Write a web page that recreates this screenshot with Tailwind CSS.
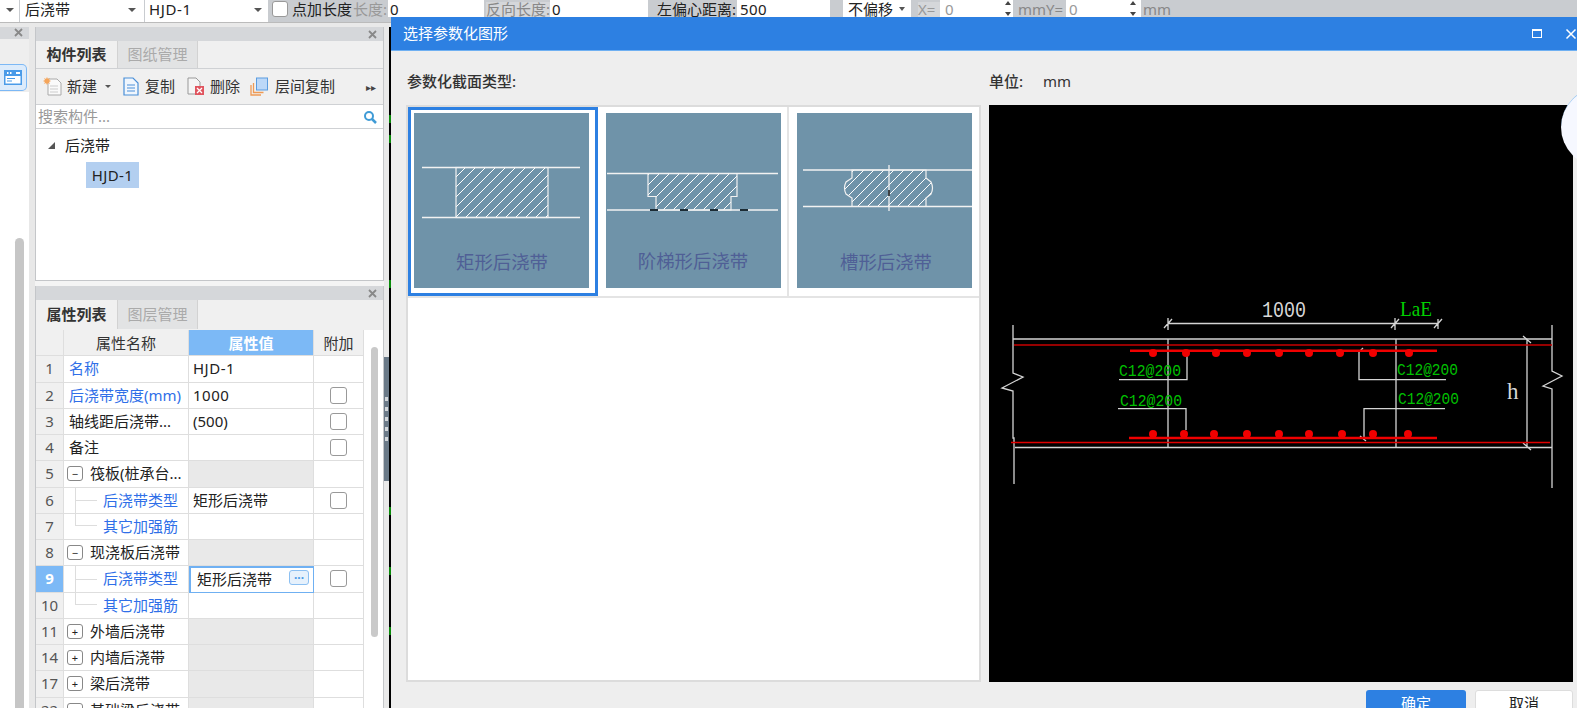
<!DOCTYPE html>
<html lang="zh">
<head>
<meta charset="utf-8">
<script src="https://cdn.jsdelivr.net/npm/@tailwindcss/browser@4"></script>
</head>
<body class="m-0">
<div class="relative w-[1577px] h-[708px] overflow-hidden bg-[#e9e9e9] text-[15px] leading-none text-[#222] font-['Noto_Sans','Noto_Sans_CJK_SC',sans-serif]">

  <!-- top toolbar -->
  <div class="flex h-[23px] items-start bg-[#c9ccd0] whitespace-nowrap border-b border-[#bbb]">
    <div class="relative h-[22px] w-[19px] bg-white"><span class="absolute left-[6px] top-[8px] border-x-[4px] border-t-[4px] border-x-transparent border-t-[#555]"></span></div>
    <div class="relative ml-[1px] h-[22px] w-[124px] bg-white pl-[5px] pt-[2px]">后浇带<span class="absolute right-[8px] top-[8px] border-x-[4px] border-t-[4px] border-x-transparent border-t-[#555]"></span></div>
    <div class="relative ml-[1px] h-[22px] w-[123px] bg-white pl-[4px] pt-[2px] tracking-[0.6px]">HJD-1<span class="absolute right-[6px] top-[8px] border-x-[4px] border-t-[4px] border-x-transparent border-t-[#555]"></span></div>
    <div class="ml-[4px] mt-[1px] h-[16px] w-[16px] rounded-[3px] border border-[#999] bg-white"></div>
    <span class="ml-[4px] mt-[2px] w-[61px]">点加长度</span>
    <span class="mt-[2px] w-[35px] text-[#999]">长度:</span>
    <div class="h-[17px] w-[96px] bg-white pl-[2px] pt-[2px]">0</div>
    <span class="ml-[2px] mt-[2px] w-[64px] bg-[#d5d7da] pb-[2px] text-[#888]">反向长度:</span>
    <div class="h-[17px] w-[98px] bg-white pl-[2px] pt-[2px]">0</div>
    <span class="ml-[8px] mt-[2px] w-[81px] pl-[1px]">左偏心距离:</span>
    <div class="h-[17px] w-[93px] bg-white pl-[3px] pt-[2px] tracking-[0.4px]">500</div>
    <div class="relative ml-[13px] h-[17px] w-[68px] bg-white pl-[5px] pt-[2px]">不偏移<span class="absolute right-[6px] top-[7px] border-x-[3px] border-t-[4px] border-x-transparent border-t-[#555]"></span></div>
    <span class="ml-[7px] mt-[2px] w-[22px] bg-[#d5d7da] pb-[2px] text-[#999]">X=</span>
    <div class="relative h-[17px] w-[73px] bg-white pl-[5px] pt-[2px] text-[#999]">0<span class="absolute right-[2px] top-[1px] border-x-[3px] border-b-[4px] border-x-transparent border-b-[#444]"></span><span class="absolute bottom-[1px] right-[2px] border-x-[3px] border-t-[4px] border-x-transparent border-t-[#444]"></span></div>
    <span class="ml-[5px] mt-[2px] w-[48px] text-[#888]">mmY=</span>
    <div class="relative h-[17px] w-[75px] bg-white pl-[3px] pt-[2px] text-[#999]">0<span class="absolute right-[5px] top-[1px] border-x-[3px] border-b-[4px] border-x-transparent border-b-[#444]"></span><span class="absolute bottom-[1px] right-[5px] border-x-[3px] border-t-[4px] border-x-transparent border-t-[#444]"></span></div>
    <span class="ml-[2px] mt-[2px] text-[#888]">mm</span>
  </div>

  <!-- workspace -->
  <div class="flex h-[685px] pt-[4px]">
    <!-- far left strip -->
    <div class="flex w-[29px] flex-col">
      <div class="flex h-[14px] items-center justify-end bg-[#d5d7da] pr-[6px]"><svg width="9" height="9" viewBox="0 0 9 9"><path d="M1 1l7 7M8 1l-7 7" stroke="#888" stroke-width="1.800"/></svg></div>
      <div class="h-[29px] bg-[#eeeeee]"></div>
      <div class="flex h-[34px] items-center bg-[#eeeeee]">
        <div class="flex h-[27px] w-[27px] items-center justify-end rounded-r-[5px] border border-l-0 border-[#7cb8f5] bg-[#dcebfb] pr-[4px]">
          <svg width="18" height="15" viewBox="0 0 18 15"><rect width="18" height="15" fill="#4a9be8"/><rect x="1.500" y="6" width="15" height="7.500" fill="#fff"/><rect x="3" y="8" width="8" height="1" fill="#4a9be8"/><rect x="3" y="10.500" width="5" height="1" fill="#4a9be8"/><rect x="3" y="2" width="1.500" height="2" fill="#fff"/><rect x="6" y="2" width="1.500" height="2" fill="#fff"/><rect x="12" y="2" width="4" height="2" fill="#fff"/></svg>
        </div>
      </div>
      <div class="flex-1 bg-white pl-[15px] pr-[5px] pt-[146px]"><div class="h-[470px] rounded-t-[5px] bg-[#c6c6c6]"></div></div>
    </div>

    <div class="w-[6px] bg-[#e8e8e8]"></div>

    <!-- main column -->
    <div class="flex w-[349px] flex-col">
      <!-- component panel -->
      <div class="flex h-[254px] flex-col border-x border-b border-[#c4c6c9]">
        <div class="flex h-[14px] shrink-0 items-center justify-end bg-[#d5d7da] pr-[6px]"><svg width="9" height="9" viewBox="0 0 9 9"><path d="M1 1l7 7M8 1l-7 7" stroke="#888" stroke-width="1.800"/></svg></div>
        <div class="flex h-[28px] shrink-0 border-b border-[#cfd1d4] bg-[#f0f0f0]">
          <div class="flex w-[81px] items-center justify-center font-bold text-[#333]">构件列表</div>
          <div class="flex w-[81px] items-center justify-center border-x border-[#d2d2d2] bg-[#e2e3e4] text-[#aaa]">图纸管理</div>
        </div>
        <div class="flex h-[36px] shrink-0 items-center border-b border-[#cfd1d4] bg-[#f0f0f0] text-[#333]">
          <svg class="ml-[7px]" width="19" height="19" viewBox="0 0 19 19"><path d="M5 2h9l4 4v12H5z" fill="#fafafa" stroke="#aaa"/><path d="M7 9h8M7 12h8M7 15h8" stroke="#ccc"/><path d="M4 0l1 2 2-1-1 2 2 1-2 1 1 2-2-1-1 2-1-2-2 1 1-2-2-1 2-1-1-2 2 1z" fill="#f5a55a"/></svg>
          <span class="ml-[5px]">新建</span>
          <span class="ml-[8px] border-x-[3px] border-t-[3px] border-x-transparent border-t-[#555]"></span>
          <svg class="ml-[12px]" width="16" height="19" viewBox="0 0 16 19"><path d="M1 1h9l5 5v12H1z" fill="#f0f6fd" stroke="#4a8fd8" stroke-width="1.200"/><path d="M4 8h8M4 11h8M4 14h8" stroke="#4a8fd8"/></svg>
          <span class="ml-[6px]">复制</span>
          <svg class="ml-[12px]" width="18" height="19" viewBox="0 0 18 19"><path d="M1 1h8l4 4v12H1z" fill="#f5f5f5" stroke="#999"/><rect x="8" y="9" width="9" height="9" fill="#e0555f"/><path d="M10 11l5 5M15 11l-5 5" stroke="#fff" stroke-width="1.300"/></svg>
          <span class="ml-[5px]">删除</span>
          <svg class="ml-[10px]" width="18" height="19" viewBox="0 0 18 19"><path d="M1 8v10h10" fill="none" stroke="#ee9a55" stroke-width="1.300"/><path d="M3.500 6v9.500h10" fill="none" stroke="#ee9a55" stroke-width="1.300"/><rect x="6.500" y="1" width="11" height="12" fill="#bcd8f8" stroke="#5a9ce0"/></svg>
          <span class="ml-[7px]">层间复制</span>
          <span class="ml-auto mr-[7px] text-[10px] text-[#444]">▸▸</span>
        </div>
        <div class="flex h-[24px] shrink-0 items-center justify-between border-b border-[#cfd1d4] bg-white pl-[2px] pr-[6px] text-[#999]">搜索构件...
          <svg width="14" height="14" viewBox="0 0 14 14"><circle cx="6" cy="6" r="4" fill="none" stroke="#3f9bd6" stroke-width="2"/><path d="M9 9l4 4" stroke="#3f9bd6" stroke-width="2.500"/></svg>
        </div>
        <div class="flex-1 bg-white">
          <div class="flex items-center pl-[12px] pt-[9px]"><span class="h-0 w-0 border-b-[7px] border-l-[7px] border-b-[#555] border-l-transparent"></span><span class="ml-[10px]">后浇带</span></div>
          <div class="ml-[50px] mt-[9px] flex h-[26px] w-[53px] items-center justify-center bg-[#b3cff0] tracking-[0.4px] text-[#222]">HJD-1</div>
        </div>
      </div>

      <div class="h-[5px] bg-[#f4f4f4]"></div>

      <!-- property panel -->
      <div class="flex flex-1 flex-col overflow-hidden border-x border-[#c4c6c9]">
        <div class="flex h-[14px] shrink-0 items-center justify-end bg-[#d5d7da] pr-[6px]"><svg width="9" height="9" viewBox="0 0 9 9"><path d="M1 1l7 7M8 1l-7 7" stroke="#888" stroke-width="1.800"/></svg></div>
        <div class="flex h-[30px] shrink-0 bg-[#f0f0f0] pb-[1px]">
          <div class="flex w-[81px] items-center justify-center font-bold text-[#333]">属性列表</div>
          <div class="flex w-[81px] items-center justify-center border-x border-[#d2d2d2] bg-[#e2e3e4] text-[#aaa]">图层管理</div>
        </div>
        <div class="flex flex-1 bg-white">
          <div class="grid w-[328px] grid-cols-[28px_125px_125px_50px] auto-rows-[26.25px] content-start [&>div]:border-b [&>div]:border-r [&>div]:border-[#dedede] [&>div]:flex [&>div]:items-center">
            <div class="bg-[#f0f0f0]"></div><div class="justify-center bg-[#f0f0f0] pt-[1px] text-[#333]">属性名称</div><div class="justify-center bg-[#7cb9f6] pt-[1px] font-bold text-white">属性值</div><div class="justify-center bg-[#f0f0f0] pt-[1px] text-[#333]">附加</div>

            <div class="justify-center bg-[#f0f0f0] text-[#555]">1</div><div class="pl-[5px] text-[#2f6fe8]">名称</div><div class="pl-[4px] tracking-[0.5px]">HJD-1</div><div></div>
            <div class="justify-center bg-[#f0f0f0] text-[#555]">2</div><div class="pl-[5px] text-[#2f6fe8]">后浇带宽度(mm)</div><div class="pl-[4px] tracking-[0.5px]">1000</div><div class="justify-center"><span class="h-[17px] w-[17px] rounded-[3px] border border-[#999]"></span></div>
            <div class="justify-center bg-[#f0f0f0] text-[#555]">3</div><div class="pl-[5px]">轴线距后浇带...</div><div class="pl-[4px]">(500)</div><div class="justify-center"><span class="h-[17px] w-[17px] rounded-[3px] border border-[#999]"></span></div>
            <div class="justify-center bg-[#f0f0f0] text-[#555]">4</div><div class="pl-[5px]">备注</div><div></div><div class="justify-center"><span class="h-[17px] w-[17px] rounded-[3px] border border-[#999]"></span></div>
            <div class="justify-center bg-[#f0f0f0] text-[#555]">5</div><div class="pl-[3px]"><span class="mr-[7px] flex h-[15px] w-[16px] items-center justify-center rounded-[3px] border border-[#888] text-[11px]">−</span>筏板(桩承台...</div><div class="bg-[#e9e9e9]"></div><div></div>
            <div class="justify-center bg-[#f0f0f0] text-[#555]">6</div><div class="relative pl-[39px] text-[#2f6fe8]"><span class="absolute left-[11px] top-0 h-full border-l border-[#ddd]"></span><span class="absolute left-[11px] top-1/2 w-[22px] border-t border-[#ddd]"></span>后浇带类型</div><div class="pl-[4px]">矩形后浇带</div><div class="justify-center"><span class="h-[17px] w-[17px] rounded-[3px] border border-[#999]"></span></div>
            <div class="justify-center bg-[#f0f0f0] text-[#555]">7</div><div class="relative pl-[39px] text-[#2f6fe8]"><span class="absolute left-[11px] top-0 h-1/2 w-[22px] border-b border-l border-[#ddd]"></span>其它加强筋</div><div></div><div></div>
            <div class="justify-center bg-[#f0f0f0] text-[#555]">8</div><div class="pl-[3px]"><span class="mr-[7px] flex h-[15px] w-[16px] items-center justify-center rounded-[3px] border border-[#888] text-[11px]">−</span>现浇板后浇带</div><div class="bg-[#e9e9e9]"></div><div></div>
            <div class="justify-center bg-[#7cb9f6] font-bold text-white">9</div><div class="relative pl-[39px] text-[#2f6fe8]"><span class="absolute left-[11px] top-0 h-full border-l border-[#ddd]"></span><span class="absolute left-[11px] top-1/2 w-[22px] border-t border-[#ddd]"></span>后浇带类型</div><div class="relative border-2 !border-[#6fb0f2] pl-[6px]">矩形后浇带<span class="absolute right-[4px] top-[2px] flex h-[15px] w-[20px] items-center justify-center rounded-[3px] border border-[#8cc0f2] bg-[#e6f1fc] text-[12px] font-bold leading-[8px] text-[#4a9be8]">···</span></div><div class="justify-center"><span class="h-[17px] w-[17px] rounded-[3px] border border-[#999]"></span></div>
            <div class="justify-center bg-[#f0f0f0] text-[#555]">10</div><div class="relative pl-[39px] text-[#2f6fe8]"><span class="absolute left-[11px] top-0 h-1/2 w-[22px] border-b border-l border-[#ddd]"></span>其它加强筋</div><div></div><div></div>
            <div class="justify-center bg-[#f0f0f0] text-[#555]">11</div><div class="pl-[3px]"><span class="mr-[7px] flex h-[15px] w-[16px] items-center justify-center rounded-[3px] border border-[#888] text-[11px]">+</span>外墙后浇带</div><div class="bg-[#e9e9e9]"></div><div></div>
            <div class="justify-center bg-[#f0f0f0] text-[#555]">14</div><div class="pl-[3px]"><span class="mr-[7px] flex h-[15px] w-[16px] items-center justify-center rounded-[3px] border border-[#888] text-[11px]">+</span>内墙后浇带</div><div class="bg-[#e9e9e9]"></div><div></div>
            <div class="justify-center bg-[#f0f0f0] text-[#555]">17</div><div class="pl-[3px]"><span class="mr-[7px] flex h-[15px] w-[16px] items-center justify-center rounded-[3px] border border-[#888] text-[11px]">+</span>梁后浇带</div><div class="bg-[#e9e9e9]"></div><div></div>
            <div class="justify-center bg-[#f0f0f0] text-[#555]">22</div><div class="pl-[3px]"><span class="mr-[7px] flex h-[15px] w-[16px] items-center justify-center rounded-[3px] border border-[#888] text-[11px]">+</span>基础梁后浇带</div><div class="bg-[#e9e9e9]"></div><div></div>
          </div>
          <div class="flex-1 pl-[7px] pr-[5px] pt-[17px]"><div class="h-[290px] rounded-full bg-[#c9c9c9]"></div></div>
        </div>
      </div>
    </div>

    <!-- resize handle and divider -->
    <div class="w-[5px] bg-[#e9e9e9] pt-[330px]"><div class="flex h-[124px] flex-col items-center justify-center gap-[6px] bg-[#6b7a88]"><span class="h-[4px] w-[3px] bg-white/70"></span><span class="h-[4px] w-[3px] bg-white/70"></span><span class="h-[4px] w-[3px] bg-white/70"></span><span class="h-[4px] w-[3px] bg-white/70"></span><span class="h-[4px] w-[3px] bg-white/70"></span></div></div>
    <div class="relative w-[2px] bg-black">
      <span class="absolute top-[88px] h-[8px] w-[2px] bg-[#0a8a0a]"></span>
      <span class="absolute top-[108px] h-[8px] w-[2px] bg-[#0a8a0a]"></span>
      <span class="absolute top-[253px] h-[8px] w-[2px] bg-[#0a8a0a]"></span>
      <span class="absolute top-[480px] h-[8px] w-[2px] bg-[#0a8a0a]"></span>
      <span class="absolute top-[540px] h-[8px] w-[2px] bg-[#0a8a0a]"></span>
      <span class="absolute top-[600px] h-[8px] w-[2px] bg-[#0a8a0a]"></span>
    </div>
  </div>

  <!-- dialog window -->
  <div class="absolute bottom-0 left-[391px] right-0 top-[17px] flex flex-col overflow-hidden bg-[#eeeeee]">
    <div class="flex h-[34px] shrink-0 items-center justify-between border-b border-[#6fb0f2] bg-[#2d80e2] pl-[12px] text-white">
      <span>选择参数化图形</span>
      <div class="flex items-center gap-[23px]">
        <span class="h-[9px] w-[10px] border border-t-2 border-white"></span>
        <svg width="12" height="12" viewBox="0 0 12 12"><path d="M1.500 1.500l9 9M10.500 1.500l-9 9" stroke="#fff" stroke-width="1.500"/></svg>
      </div>
    </div>
    <div class="flex gap-[8px] pl-[15px] pr-[4px]">
      <div class="w-[575px] shrink-0">
        <div class="flex h-[54px] items-center pt-[6px] pl-[1px] font-medium text-[#333]">参数化截面类型:</div>
        <div class="h-[577px] border-2 border-[#dcdcdc] bg-white">
          <div class="grid h-[191px] grid-cols-[190px_191px_1fr] border-b-2 border-[#e4e4e4]">
            <div class="h-[189px] border-[3px] border-[#2d80e2] p-[3px]">
              <svg width="175" height="175" viewBox="415 113 175 175" class="bg-[#6f93a9]">
                <defs><pattern id="h1" width="10" height="10" patternUnits="userSpaceOnUse" patternTransform="translate(457 167)"><path d="M-1 11L11-1" stroke="#fff" stroke-width="1"/><path d="M-1 1L1-1M9 11L11 9" stroke="#fff" stroke-width="1"/></pattern></defs>
                <path d="M423 167.500H581M423 217.500H581" stroke="#f2f2f2" stroke-width="1.300"/>
                <rect x="457" y="167.500" width="92" height="50" fill="url(#h1)" stroke="#f2f2f2" stroke-width="1.200"/>
                <text x="503" y="269" text-anchor="middle" font-size="18.400" fill="#4f5f96">矩形后浇带</text>
              </svg>
            </div>
            <div class="border-r-2 border-[#e4e4e4] pl-[8px] pt-[6px]">
              <svg width="175" height="175" viewBox="607 113 175 175" class="bg-[#6f93a9]">
                <path d="M608 173.500H779M608 210H779" stroke="#f2f2f2" stroke-width="1.300"/>
                <path d="M649 173.500H738V196.500H732V210H657V196.500H649Z" fill="url(#h1)" stroke="#f2f2f2" stroke-width="1.200"/>
                <path d="M651 210H659M681 210H689M711 210H719M741 210H749" stroke="#1c2c35" stroke-width="2"/>
                <text x="694" y="268" text-anchor="middle" font-size="18.400" fill="#4f5f96">阶梯形后浇带</text>
              </svg>
            </div>
            <div class="pl-[8px] pt-[6px]">
              <svg width="175" height="175" viewBox="797 113 175 175" class="bg-[#6f93a9]">
                <path d="M803 170H973M803 206.500H973" stroke="#f2f2f2" stroke-width="1.300"/>
                <path d="M852 170H926V178L931 182Q934 188 931 194L926 198V206.500H852V198L846 194Q843 188 846 182L852 178Z" fill="url(#h1)" stroke="#f2f2f2" stroke-width="1.200"/>
                <path d="M889 165V211" stroke="#f2f2f2" stroke-width="1.300"/>
                <path d="M889 190V196" stroke="#111" stroke-width="1.500"/>
                <text x="886" y="269" text-anchor="middle" font-size="18.400" fill="#4f5f96">槽形后浇带</text>
              </svg>
            </div>
          </div>
        </div>
      </div>
      <div class="flex-1">
        <div class="flex h-[54px] items-center pt-[6px] font-medium text-[#333]">单位:<span class="ml-[20px] font-normal">mm</span></div>
        <svg class="block h-[577px] w-full bg-black" viewBox="989 105 584 577">
          <g fill="none" stroke="#d4d4d4" stroke-width="1.300">
            <path d="M1013 325V373L1023 377L1002 388L1013 391V438H1014V484"/>
            <path d="M1552 325V371L1562 376L1543 386L1552 389V488"/>
            <path d="M1013 339H1552M1015 447.500H1552"/>
            <path d="M1168 339V447.500M1396 339V447.500"/>
            <path d="M1168 323.500H1438M1168 318V330M1164 328L1172 319M1395 318V330M1391 328L1399 319M1438 319V329M1434 328L1442 319"/>
            <path d="M1527 339V448M1523 336L1531 343M1523 443L1531 450"/>
            <path d="M1119 379.700H1187V355"/>
            <path d="M1118 408.700H1186V430"/>
            <path d="M1446 379.700H1359V352L1363 348"/>
            <path d="M1445 408.700H1364V440M1360 436L1366 441"/>
          </g>
          <path d="M1014 345H1552" stroke="#c80000" stroke-width="1.300"/>
          <path d="M1011 442.500H1550" stroke="#e00000" stroke-width="1.300"/>
          <path d="M1130 350.700H1437M1129 438H1437" stroke="#f00000" stroke-width="2.500"/>
          <g fill="#f00000">
            <circle cx="1153" cy="353" r="4"/><circle cx="1186" cy="353" r="4"/><circle cx="1216" cy="353" r="4"/><circle cx="1247" cy="353" r="4"/><circle cx="1279" cy="353" r="4"/><circle cx="1309" cy="353" r="4"/><circle cx="1340" cy="353" r="4"/><circle cx="1373" cy="353" r="4"/><circle cx="1409" cy="353" r="4"/>
            <circle cx="1153" cy="434" r="4"/><circle cx="1184" cy="434" r="4"/><circle cx="1214" cy="434" r="4"/><circle cx="1247" cy="434" r="4"/><circle cx="1279" cy="434" r="4"/><circle cx="1309" cy="434" r="4"/><circle cx="1342" cy="434" r="4"/><circle cx="1373" cy="434" r="4"/><circle cx="1408" cy="434" r="4"/>
          </g>
          <g font-family="'Liberation Mono',monospace" font-size="17" fill="#00c000">
            <text x="1119" y="376" textLength="62" lengthAdjust="spacingAndGlyphs">C12@200</text>
            <text x="1120" y="405.500" textLength="62" lengthAdjust="spacingAndGlyphs">C12@200</text>
            <text x="1397" y="375" textLength="61" lengthAdjust="spacingAndGlyphs">C12@200</text>
            <text x="1398" y="404" textLength="61" lengthAdjust="spacingAndGlyphs">C12@200</text>
          </g>
          <text x="1262" y="317" font-family="'Liberation Mono',monospace" font-size="22" fill="#d8d8d8" textLength="44" lengthAdjust="spacingAndGlyphs">1000</text>
          <text x="1400" y="316" font-family="'Liberation Serif',serif" font-size="22" fill="#00d000" textLength="32" lengthAdjust="spacingAndGlyphs">LaE</text>
          <text x="1507" y="399" font-family="'Liberation Serif',serif" font-size="23" fill="#d8d8d8">h</text>
        </svg>
      </div>
    </div>
    <div class="mt-[8px] flex justify-end gap-[9px] pr-[4px]">
      <div class="flex h-[26px] w-[100px] items-center justify-center rounded-[3px] bg-[#2d80e2] text-white">确定</div>
      <div class="flex h-[26px] w-[98px] items-center justify-center rounded-[3px] border border-[#ddd] bg-white">取消</div>
    </div>
  </div>

  <!-- floating round widget at the edge -->
  <div class="absolute left-[1561px] top-[87px] h-[80px] w-[80px] rounded-full border-t border-[#8cc0f2] bg-[#f6f8ff]"></div>
</div>
</body>
</html>
